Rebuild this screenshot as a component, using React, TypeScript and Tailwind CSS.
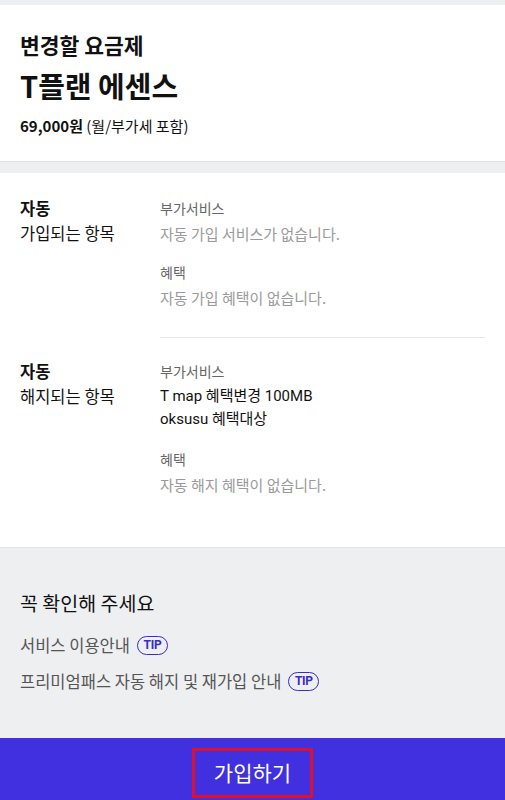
import React from "react";

const font = { fontFamily: '"Noto Sans CJK KR", Roboto, sans-serif' };

function Tip() {
  return (
    <span
      className="ml-[7px] inline-flex h-[19px] w-[31px] items-center justify-center rounded-full border-[1.5px] border-[#3a2bc9] text-[12px] font-bold leading-none tracking-[-0.3px] text-[#3a2bc9]"
      style={{ fontFamily: 'Roboto, sans-serif' }}
    >
      TIP
    </span>
  );
}

function Row({
  title,
  sub,
  children,
}: {
  title: string;
  sub: string;
  children: React.ReactNode;
}) {
  return (
    <div className="flex">
      <div className="w-[140px] shrink-0">
        <div className="text-[16.5px] font-bold leading-[25px] text-[#111]">{title}</div>
        <div className="text-[16.5px] leading-[25px] text-[#111]">{sub}</div>
      </div>
      <div className="flex-1">{children}</div>
    </div>
  );
}

function Label({ children }: { children: React.ReactNode }) {
  return <div className="text-[14px] leading-[25px] text-[#666]">{children}</div>;
}

function Empty({ children }: { children: React.ReactNode }) {
  return <div className="text-[15px] leading-[25px] text-[#9a9a9a]">{children}</div>;
}

export default function App() {
  return (
    <div style={font} className="flex h-[800px] w-[505px] flex-col overflow-hidden bg-[#eeeff1]">
      <div className="h-[5px] shrink-0 bg-[#eeeff1]" />
      <div className="shrink-0 bg-white px-5 pb-[25px] pt-[26px]">
        <div className="text-[21.5px] font-bold leading-[28px] text-[#111]">변경할 요금제</div>
        <div className="mt-[7px] text-[29px] font-bold leading-[38px] text-[#111]">T플랜 에센스</div>
        <div className="mt-[12px] text-[15px] leading-[20px] text-[#111]">
          <span className="font-bold">69,000원</span> (월/부가세 포함)
        </div>
      </div>
      <div className="h-[12px] shrink-0 border-t border-[#e3e3e5] bg-[#eeeff1]" />
      <div className="shrink-0 bg-white px-5 pb-[50px] pt-[23px]">
        <Row title="자동" sub="가입되는 항목">
          <Label>부가서비스</Label>
          <Empty>자동 가입 서비스가 없습니다.</Empty>
          <div className="mt-[14px]">
            <Label>혜택</Label>
            <Empty>자동 가입 혜택이 없습니다.</Empty>
          </div>
        </Row>
        <div className="mb-[21px] ml-[140px] mt-[27px] h-px bg-[#e6e6e6]" />
        <Row title="자동" sub="해지되는 항목">
          <Label>부가서비스</Label>
          <div className="text-[15px] leading-[24px] text-[#111]" style={{ fontFamily: 'Roboto, "Noto Sans CJK KR", sans-serif' }}>
            T map 혜택변경 100MB
          </div>
          <div className="text-[15px] leading-[23px] text-[#111]" style={{ fontFamily: 'Roboto, "Noto Sans CJK KR", sans-serif' }}>
            oksusu 혜택대상
          </div>
          <div className="mt-[16px]">
            <Label>혜택</Label>
            <Empty>자동 해지 혜택이 없습니다.</Empty>
          </div>
        </Row>
      </div>
      <div className="flex-1 border-t border-[#e3e3e5] bg-[#eeeff1] px-5 pt-[42px]">
        <div className="text-[19.5px] leading-[26px] text-[#111]">꼭 확인해 주세요</div>
        <div className="mt-[18px] flex items-center text-[16.5px] leading-[22px] text-[#555]">
          서비스 이용안내<Tip />
        </div>
        <div className="mt-[14px] flex items-center text-[16.5px] leading-[22px] text-[#555]">
          프리미엄패스 자동 해지 및 재가입 안내<Tip />
        </div>
      </div>
      <div className="flex h-[62px] shrink-0 items-start justify-center bg-[#4130df] pt-[10px]">
        <div className="flex h-[50px] w-[121px] items-center justify-center border-[3px] border-[#e0102a] text-[21px] text-white">
          가입하기
        </div>
      </div>
    </div>
  );
}
